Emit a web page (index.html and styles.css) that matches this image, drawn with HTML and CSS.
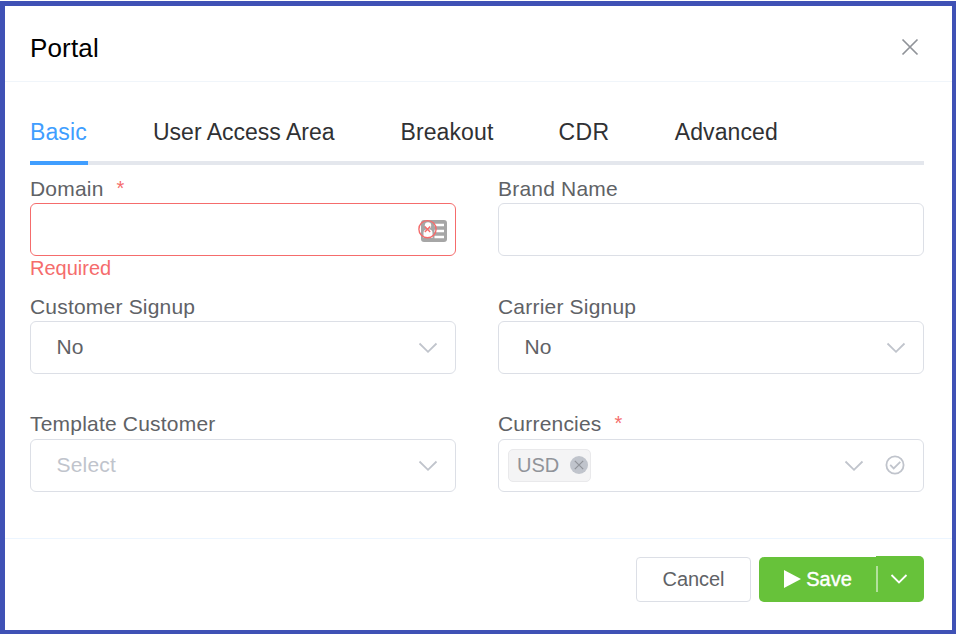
FILE: index.html
```html
<!DOCTYPE html>
<html lang="en">
<head>
<meta charset="utf-8">
<title>Portal</title>
<link rel="stylesheet" href="styles.css">
</head>
<body>
<div class="dialog">
  <header class="header">
    <h1 class="title">Portal</h1>
    <svg class="close" width="18" height="18" viewBox="0 0 18 18"><path d="M1.500 1.500l15 15M16.500 1.500l-15 15"/></svg>
  </header>
  <main class="body">
    <nav class="tabs">
      <span class="tab active">Basic</span>
      <span class="tab tab-users">User Access Area</span>
      <span class="tab">Breakout</span>
      <span class="tab tab-cdr">CDR</span>
      <span class="tab">Advanced</span>
    </nav>
    <div class="form">
      <div class="field">
        <label class="label">Domain<span class="star">*</span></label>
        <div class="input invalid">
          <svg class="card-icon" width="32" height="28" viewBox="0 0 32 28">
            <rect x="3" y="3" width="26" height="22" rx="3" fill="#a6a6a6"/>
            <circle cx="10" cy="8.500" r="3.200" fill="#fff"/>
            <path d="M5.500 21v-5q0-3.500 3-3.500h3q3 0 3 3.500v5z" fill="#fff"/>
            <path d="M16.500 8h9.500M16.500 14h9.500M16.500 20h9.500" stroke="#fff" stroke-width="2.400"/>
            <circle cx="9.500" cy="12.200" r="8.600" fill="none" stroke="#f56c6c" stroke-width="1.400"/>
            <path d="M6.800 9.500l5.400 5.400M12.200 9.500l-5.400 5.400" stroke="#f56c6c" stroke-width="1.400"/>
          </svg>
        </div>
        <div class="error">Required</div>
      </div>
      <div class="field">
        <label class="label">Brand Name</label>
        <div class="input"></div>
      </div>
      <div class="field">
        <label class="label">Customer Signup</label>
        <div class="input"><span class="value">No</span><svg class="chevron" width="20" height="12" viewBox="0 0 20 12"><path d="M1.500 1.500L10 9.800l8.500-8.300"/></svg></div>
      </div>
      <div class="field">
        <label class="label">Carrier Signup</label>
        <div class="input"><span class="value">No</span><svg class="chevron" width="20" height="12" viewBox="0 0 20 12"><path d="M1.500 1.500L10 9.800l8.500-8.300"/></svg></div>
      </div>
      <div class="field">
        <label class="label raised">Template Customer</label>
        <div class="input"><span class="value placeholder">Select</span><svg class="chevron" width="20" height="12" viewBox="0 0 20 12"><path d="M1.500 1.500L10 9.800l8.500-8.300"/></svg></div>
      </div>
      <div class="field">
        <label class="label raised">Currencies<span class="star">*</span></label>
        <div class="input multi">
          <span class="tag">USD<svg class="tag-close" width="18" height="18" viewBox="0 0 18 18"><circle cx="9" cy="9" r="9" fill="#c0c4cc"/><path d="M4.800 4.800l8.400 8.400M13.200 4.800l-8.400 8.400" stroke="#909399" stroke-width="1.200"/></svg></span>
          <svg class="chevron" width="20" height="12" viewBox="0 0 20 12"><path d="M1.500 1.500L10 9.800l8.500-8.300"/></svg>
          <svg class="check" width="20" height="20" viewBox="0 0 20 20"><circle cx="10" cy="10" r="8.600"/><path d="M5.200 9.800l3.500 3.600 6.600-6.600"/></svg>
        </div>
      </div>
    </div>
  </main>
  <footer class="footer">
    <div class="btn cancel">Cancel</div>
    <div class="split">
      <div class="btn save"><svg width="17" height="18" viewBox="0 0 17 18"><path d="M0 0l17 9-17 9z" fill="#fff"/></svg><span class="save-text">Save</span></div>
      <div class="btn more"><svg class="more-chevron" width="18" height="12" viewBox="0 0 18 12"><path d="M1.500 2L9 9.500l7.500-7.500"/></svg></div>
    </div>
  </footer>
</div>
</body>
</html>
```
FILE: styles.css
```css
* { box-sizing: border-box; }
body {
  margin: 0;
  background: #fff;
  font-family: "Liberation Sans", Arial, sans-serif;
  color: #606266;
}
svg { display: block; flex: none; }
.dialog {
  display: flex;
  flex-direction: column;
  height: 633px;
  margin-top: 1px;
  border: solid #3f51b5;
  border-width: 5px 4px 4px 5px;
}
.header {
  display: flex;
  align-items: center;
  justify-content: space-between;
  height: 76px;
  padding: 8px 33px 0 25px;
  border-bottom: 1px solid #f0f5fa;
}
.title { margin: 0; padding-top: 1px; font-size: 26px; line-height: 31px; font-weight: 400; letter-spacing: .15px; color: #000; }
.close { margin-top: -1px; stroke: #909399; stroke-width: 1.7; fill: none; }
.body { flex: 1; padding: 20px 28px 0 25px; }
.tabs {
  display: flex;
  gap: 65px;
  height: 63px;
  border-bottom: 4px solid #e4e7ed;
}
.tab {
  height: 63px;
  font-size: 23px;
  line-height: 60px;
  letter-spacing: .1px;
  color: #303133;
  white-space: nowrap;
}
.tab-users { margin-right: 1px; letter-spacing: 0; }
.tab-cdr { letter-spacing: .5px; }
.active { width: 58px; color: #409eff; border-bottom: 4px solid #409eff; }
.form {
  display: grid;
  grid-template-columns: 426px 426px;
  column-gap: 42px;
  grid-template-rows: 118px 118px 118px;
  padding-top: 9px;
}
.label {
  display: flex;
  height: 29px;
  font-size: 21px;
  line-height: 30px;
  letter-spacing: .2px;
}
.raised { line-height: 28px; }
.star { margin: -1px 0 0 13px; font-size: 20px; color: #f56c6c; }
.input {
  display: flex;
  align-items: center;
  justify-content: space-between;
  height: 53px;
  padding: 0 17px 0 25px;
  border: 1px solid #dcdfe6;
  border-radius: 6px;
  font-size: 21px;
}
.invalid { justify-content: flex-end; padding-right: 5px; border-color: #f56c6c; }
.card-icon { margin-top: 2px; }
.value { line-height: 49px; margin: 0 0 2px .5px; }
.placeholder { color: #c0c4cc; letter-spacing: .2px; }
.chevron, .check { fill: none; stroke: #c0c4cc; stroke-width: 1.8; }
.error { font-size: 20px; line-height: 25px; color: #f56c6c; }
.multi { padding: 0 18px 0 9px; }
.multi .chevron { margin: 0 21px 0 auto; }
.check { margin-bottom: 2px; }
.tag {
  display: flex;
  align-items: center;
  justify-content: space-between;
  width: 83px;
  height: 33px;
  padding: 0 2px 0 8px;
  border: 1px solid #e9e9eb;
  border-radius: 5px;
  background: #f4f4f5;
  color: #909399;
  font-size: 20px;
}
.tag-close { margin-bottom: 1px; }
.footer {
  display: flex;
  justify-content: flex-end;
  gap: 8px;
  height: 92px;
  padding: 17px 28px 0 0;
  border-top: 1px solid #ecf5ff;
}
.btn {
  display: flex;
  align-items: center;
  justify-content: center;
  height: 45px;
  font-size: 20px;
}
.cancel { width: 115px; margin-top: 1px; border: 1px solid #dcdfe6; border-radius: 4px; padding-bottom: 1px; letter-spacing: -.05px; }
.split { display: flex; color: #fff; }
.save {
  gap: 5px;
  width: 117px;
  margin-top: 1px;
  padding: 0 0 1px 1px;
  background: #67c23a;
  border-radius: 5px 0 0 5px;
  -webkit-text-stroke: .4px #fff;
}
.more {
  width: 48px;
  height: 46px;
  background: linear-gradient(#b3e19d, #b3e19d) 0 10px / 2px 26px no-repeat #67c23a;
  border-radius: 0 5px 5px 0;
}
.more-chevron { margin-right: 2px; fill: none; stroke: #fff; stroke-width: 1.8; }
```
